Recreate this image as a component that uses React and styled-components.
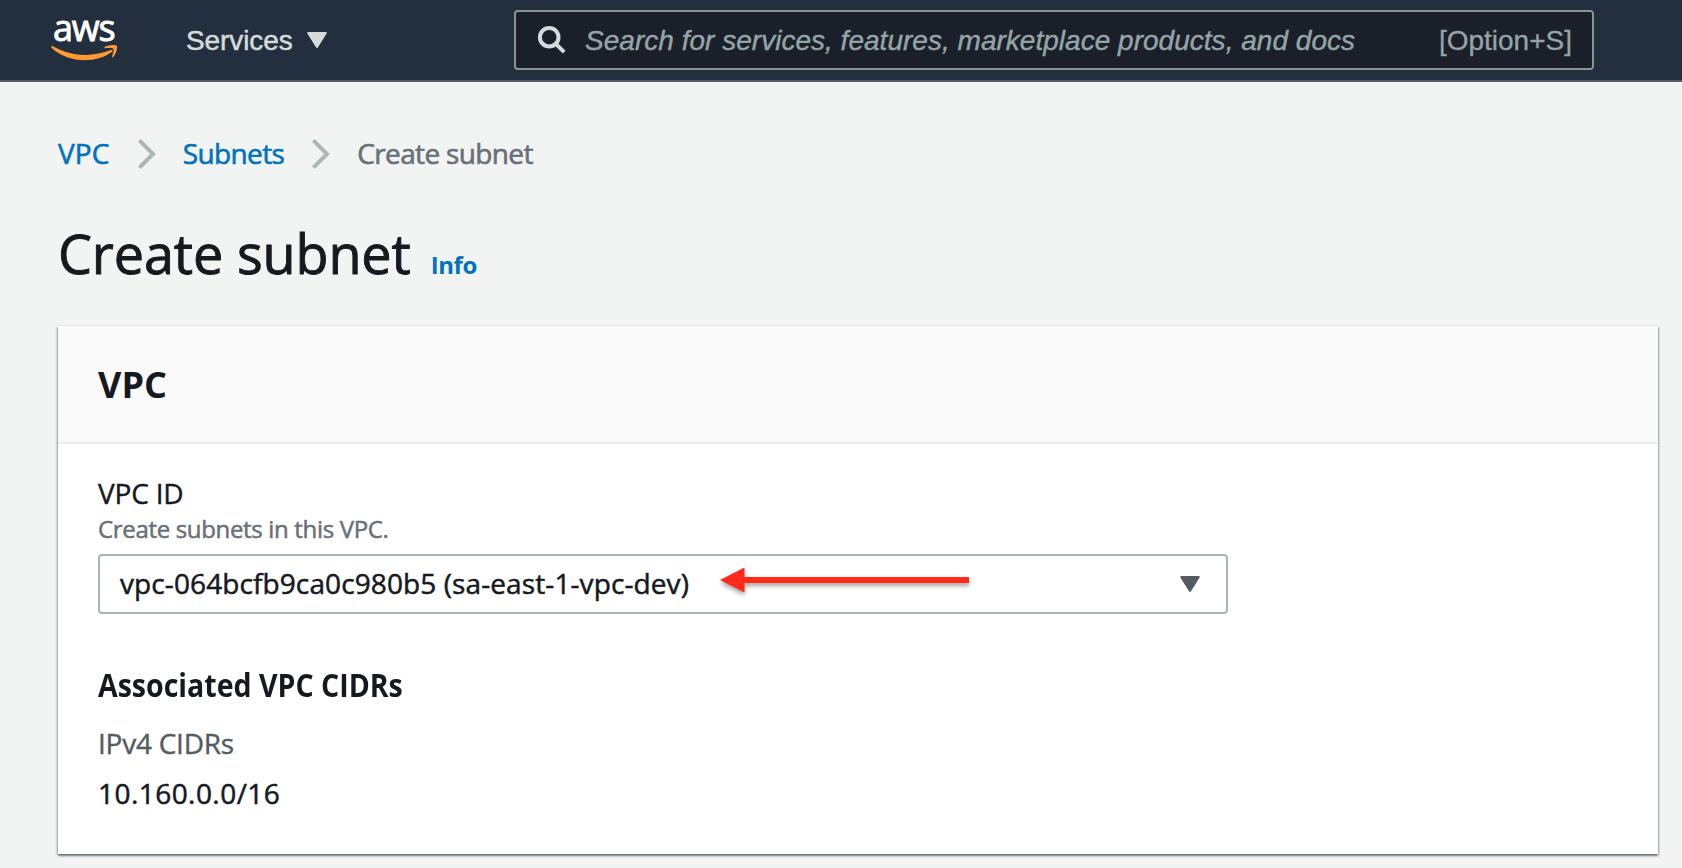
import React from "react";
import styled, { createGlobalStyle } from "styled-components";

const GlobalStyle = createGlobalStyle`
  * { box-sizing: border-box; }
  html, body { margin: 0; height: 868px; overflow: hidden; background: #f2f3f3; }
  body {
    font-family: "Open Sans", "Noto Sans", sans-serif;
    font-size: 28px;
    line-height: 40px;
    color: #16191f;
  }
  h1, h2, h3, p { margin: 0; font-weight: 400; }
  a { color: #0073bb; text-decoration: none; }
  svg { display: block; flex: none; overflow: visible; }
`;

const TopBar = styled.header`
  display: flex;
  align-items: center;
  height: 82px;
  padding: 0 88px 0 51px;
  border-bottom: 2px solid #545b64;
  background: #232f3e;
  font-family: "Liberation Sans", Arial, sans-serif;
`;

const Logo = styled.div`
  display: flex;
  flex-direction: column;
  width: 67px;
  height: 80px;
  padding-top: 10px;
`;

const LogoText = styled.span`
  height: 35px;
  padding-left: 2px;
  font: 400 36px/35px "Open Sans", sans-serif;
  letter-spacing: -1.2px;
  color: #fff;
  -webkit-text-stroke: 0.9px #fff;
`;

const ServicesButton = styled.div`
  display: flex;
  align-items: center;
  gap: 14px;
  width: 328px;
  margin-left: 68px;
  letter-spacing: -0.1px;
  color: #d5dbdb;
  -webkit-text-stroke: 0.5px #d5dbdb;
  span { padding-top: 2px; }
`;

const SearchBox = styled.div`
  display: flex;
  align-items: center;
  flex: 1;
  height: 60px;
  padding: 0 20px 0 22px;
  border: 2px solid #879596;
  border-radius: 4px;
  background: #1a1f29;
  color: #95a5a6;
`;

const SearchHint = styled.span`
  flex: 1;
  margin-left: 19px;
  padding-top: 2px;
  font-style: italic;
  letter-spacing: 0.02px;
  white-space: nowrap;
  -webkit-text-stroke: 0.4px #95a5a6;
`;

const Shortcut = styled.span`
  padding-top: 2px;
  -webkit-text-stroke: 0.3px #95a5a6;
`;

const Page = styled.main`
  padding: 51px 24px 0 58px;
`;

const Breadcrumbs = styled.nav`
  display: flex;
  align-items: center;
  height: 40px;
  svg { margin: 2px 27px 0 28px; }
`;

const Crumb = styled.span`
  color: ${(p) => (p.$link ? "#0073bb" : "#687078")};
  letter-spacing: ${(p) => p.$spacing || 0}px;
  -webkit-text-stroke: 0.6px;
`;

const TitleRow = styled.div`
  display: flex;
  align-items: baseline;
  margin-top: 47px;
  height: 66px;
`;

const Title = styled.h1`
  font-size: 54px;
  line-height: 66px;
  letter-spacing: -0.15px;
  -webkit-text-stroke: 0.9px;
`;

const InfoLink = styled.a`
  margin-left: 20px;
  font-size: 24px;
  font-weight: 700;
  line-height: 34px;
  letter-spacing: -0.4px;
`;

const Card = styled.section`
  margin-top: 40px;
  height: 528px;
  background: #fff;
  box-shadow: 0 2px 2px 0 rgba(0, 28, 36, 0.4), 1px 1px 2px 0 rgba(0, 28, 36, 0.25),
    -1px 1px 2px 0 rgba(0, 28, 36, 0.25), 0 -1px 0 0 #eaeded;
`;

const CardHeader = styled.div`
  padding: 37px 40px 35px;
  border-bottom: 2px solid #eaeded;
  background: #fafafa;
`;

const CardTitle = styled.h2`
  font-size: 36px;
  font-weight: 700;
  line-height: 44px;
`;

const CardBody = styled.div`
  padding: 31px 40px 41px;
`;

const FieldLabel = styled.p`
  line-height: 36px;
  letter-spacing: -0.2px;
  -webkit-text-stroke: 0.4px;
`;

const FieldHelp = styled.p`
  padding-top: 1px;
  font-size: 24px;
  line-height: 34px;
  letter-spacing: -0.33px;
  color: #687078;
  -webkit-text-stroke: 0.5px;
`;

const Select = styled.div`
  position: relative;
  display: flex;
  align-items: center;
  justify-content: space-between;
  width: 1130px;
  height: 60px;
  margin-top: 8px;
  padding: 0 26px 0 20px;
  border: 2px solid #aab7b8;
  border-radius: 4px;
`;

const SelectValue = styled.span`
  padding-bottom: 2px;
  letter-spacing: 0.1px;
  -webkit-text-stroke: 0.5px;
`;

const Pointer = styled.svg`
  position: absolute;
  left: 618px;
  top: 9px;
  filter: drop-shadow(0 3px 2px rgba(0, 0, 0, 0.35));
`;

const SectionTitle = styled.h3`
  margin-top: 51px;
  font-weight: 700;
  transform: scaleX(0.871);
  transform-origin: left center;
`;

const DetailLabel = styled.p`
  margin-top: 18px;
  letter-spacing: -0.25px;
  color: #545b64;
  -webkit-text-stroke: 0.4px;
`;

const DetailValue = styled.p`
  margin-top: 10px;
  letter-spacing: 0.45px;
  -webkit-text-stroke: 0.5px;
`;

const Caret = ({ color }) => (
  <svg width="20" height="16" viewBox="0 0 20 16">
    <path d="M1.2 1H18.8L10 15Z" fill={color} stroke={color} strokeWidth="2" strokeLinejoin="round" />
  </svg>
);

const Chevron = () => (
  <svg width="18" height="30" viewBox="0 0 18 30" fill="none" stroke="#aab7b8" strokeWidth="4">
    <path d="M1.4 1.4L15 15L1.4 28.6" />
  </svg>
);

export default function App() {
  return (
    <>
      <GlobalStyle />
      <TopBar>
        <Logo>
          <LogoText>aws</LogoText>
          <svg width="67" height="16" viewBox="0 0 67 16" fill="#ff9933">
            <path d="M.3 1.7C.7.8 1.5.9 2.5 1.5C21 12 42 12 60 5C61.3 4.5 62.2 5.8 60.8 6.9C46 18 18 19 .7 3C.3 2.6 .1 2.1 .3 1.7Z" />
            <path d="M53.6 1.9C56.5-.2 64.8-.7 65.8.8C66.8 2.3 65.4 9.1 62 12C61.2 12.6 60.7 12.2 61 11.3C62 8.9 63.1 5 62.3 3.8C61.4 2.6 57 2.9 54.5 3.2C53.3 3.3 52.9 2.5 53.6 1.9Z" />
          </svg>
        </Logo>
        <ServicesButton>
          <span>Services</span>
          <Caret color="#d5dbdb" />
        </ServicesButton>
        <SearchBox>
          <svg width="28" height="28" viewBox="0 0 28 28" fill="none" stroke="#d5dbdb" strokeWidth="4">
            <circle cx="11.2" cy="11.2" r="9.3" />
            <path d="M17.8 17.8L26.2 26.2" />
          </svg>
          <SearchHint>Search for services, features, marketplace products, and docs</SearchHint>
          <Shortcut>[Option+S]</Shortcut>
        </SearchBox>
      </TopBar>
      <Page>
        <Breadcrumbs>
          <Crumb as="a" $link $spacing={0.15}>VPC</Crumb>
          <Chevron />
          <Crumb as="a" $link $spacing={-0.6}>Subnets</Crumb>
          <Chevron />
          <Crumb $spacing={-0.65}>Create subnet</Crumb>
        </Breadcrumbs>
        <TitleRow>
          <Title>Create subnet</Title>
          <InfoLink>Info</InfoLink>
        </TitleRow>
        <Card>
          <CardHeader>
            <CardTitle>VPC</CardTitle>
          </CardHeader>
          <CardBody>
            <FieldLabel>VPC ID</FieldLabel>
            <FieldHelp>Create subnets in this VPC.</FieldHelp>
            <Select>
              <SelectValue>vpc-064bcfb9ca0c980b5 (sa-east-1-vpc-dev)</SelectValue>
              <Caret color="#545b64" />
              <Pointer width="250" height="30" viewBox="0 0 250 30" fill="#ff2a1a">
                <path d="M2 15L26.5 2.5V12.1H251V17.9H26.5V27.5Z" />
              </Pointer>
            </Select>
            <SectionTitle>Associated VPC CIDRs</SectionTitle>
            <DetailLabel>IPv4 CIDRs</DetailLabel>
            <DetailValue>10.160.0.0/16</DetailValue>
          </CardBody>
        </Card>
      </Page>
    </>
  );
}
